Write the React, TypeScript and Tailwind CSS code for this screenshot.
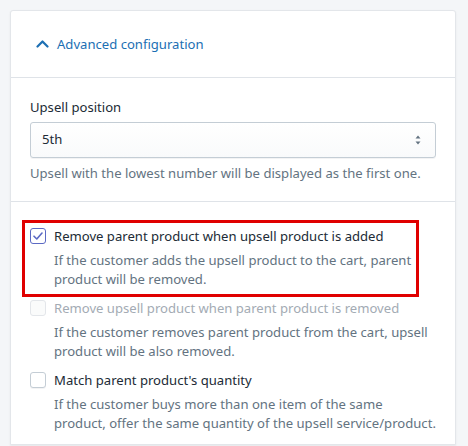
import React from "react";

const font = { fontFamily: '"Noto Sans", "Open Sans", sans-serif' };

function Check({ state }: { state: "checked" | "unchecked" | "disabled" }) {
  if (state === "checked") {
    return (
      <span className="mt-[2px] flex h-[16px] w-[16px] shrink-0 items-center justify-center rounded-[3px] border border-[#5c6ac4] bg-white">
        <svg width="10" height="8" viewBox="0 0 10 8" fill="none">
          <path d="M1 4.2 L3.8 7 L9 1" stroke="#5c6ac4" strokeWidth="1.6" strokeLinecap="round" strokeLinejoin="round" />
        </svg>
      </span>
    );
  }
  if (state === "disabled") {
    return <span className="mt-[2px] h-[16px] w-[16px] shrink-0 rounded-[3px] border border-[#e3e6ea] bg-[#fafbfb]" />;
  }
  return <span className="mt-[2px] h-[16px] w-[16px] shrink-0 rounded-[3px] border border-[#c4cdd5] bg-white shadow-[0_1px_0_rgba(22,29,37,0.05)]" />;
}

function Item({
  state,
  label,
  desc,
  annotated,
}: {
  state: "checked" | "unchecked" | "disabled";
  label: string;
  desc: React.ReactNode;
  annotated?: boolean;
}) {
  return (
    <div className="relative flex gap-[8px]">
      {annotated && (
        <div className="pointer-events-none absolute -left-[8px] -top-[6px] -bottom-[8px] w-[397px] border-[3px] border-[#e00000]" />
      )}
      <Check state={state} />
      <div className="flex flex-col whitespace-nowrap">
        <div className={`text-[13.1px] leading-[20px] ${state === "disabled" ? "text-[#a3abb4]" : "text-[#212b36]"}`}>{label}</div>
        <div className="mt-[5px] text-[13.1px] leading-[19px] text-[#637381]">{desc}</div>
      </div>
    </div>
  );
}

export default function App() {
  return (
    <div className="h-[446px] overflow-hidden bg-[#f4f6f8] pl-[10px] pr-[12px] pt-[10px]" style={font}>
      <div className="rounded-t-[3px] border border-[#e3e6ea] bg-white shadow-[0_1px_2px_rgba(63,63,68,0.08)]">
        <div className="flex h-[66px] items-center gap-[8px] pl-[25px]">
          <svg width="13" height="9" viewBox="0 0 13 9" fill="none" className="mt-[-2px]">
            <path d="M1.5 7.5 L6.5 2.5 L11.5 7.5" stroke="#1c6fb3" strokeWidth="2.2" strokeLinecap="round" strokeLinejoin="round" />
          </svg>
          <span className="text-[13.1px] leading-[20px] text-[#1c6fb3]">Advanced configuration</span>
        </div>
        <div className="border-t border-[#dfe3e8] px-[19px] pb-[18px] pt-[19px]">
          <div className="text-[13.1px] leading-[20px] text-[#212b36]">Upsell position</div>
          <div className="mt-[5px] flex h-[36px] items-center justify-between rounded-[3px] border border-[#c4cdd5] bg-gradient-to-b from-white to-[#f9fafb] pl-[11px] pr-[14px] shadow-[0_1px_0_rgba(22,29,37,0.05)]">
            <span className="text-[13.1px] text-[#212b36]">5th</span>
            <svg width="6" height="10" viewBox="0 0 6 10">
              <path d="M3 0.5 L5.5 3.5 L0.5 3.5 Z" fill="#637381" />
              <path d="M3 9.5 L5.5 6.5 L0.5 6.5 Z" fill="#637381" />
            </svg>
          </div>
          <div className="mt-[5px] text-[13.1px] leading-[20px] text-[#637381]">
            Upsell with the lowest number will be displayed as the first one.
          </div>
        </div>
        <div className="flex flex-col gap-[9px] border-t border-[#dfe3e8] pb-[11px] pl-[19px] pr-[19px] pt-[24px]">
          <Item
            state="checked"
            annotated
            label="Remove parent product when upsell product is added"
            desc={<>If the customer adds the upsell product to the cart, parent<br />product will be removed.</>}
          />
          <Item
            state="disabled"
            label="Remove upsell product when parent product is removed"
            desc={<>If the customer removes parent product from the cart, upsell<br />product will be also removed.</>}
          />
          <Item
            state="unchecked"
            label="Match parent product's quantity"
            desc={<>If the customer buys more than one item of the same<br />product, offer the same quantity of the upsell service/product.</>}
          />
        </div>
      </div>
    </div>
  );
}
